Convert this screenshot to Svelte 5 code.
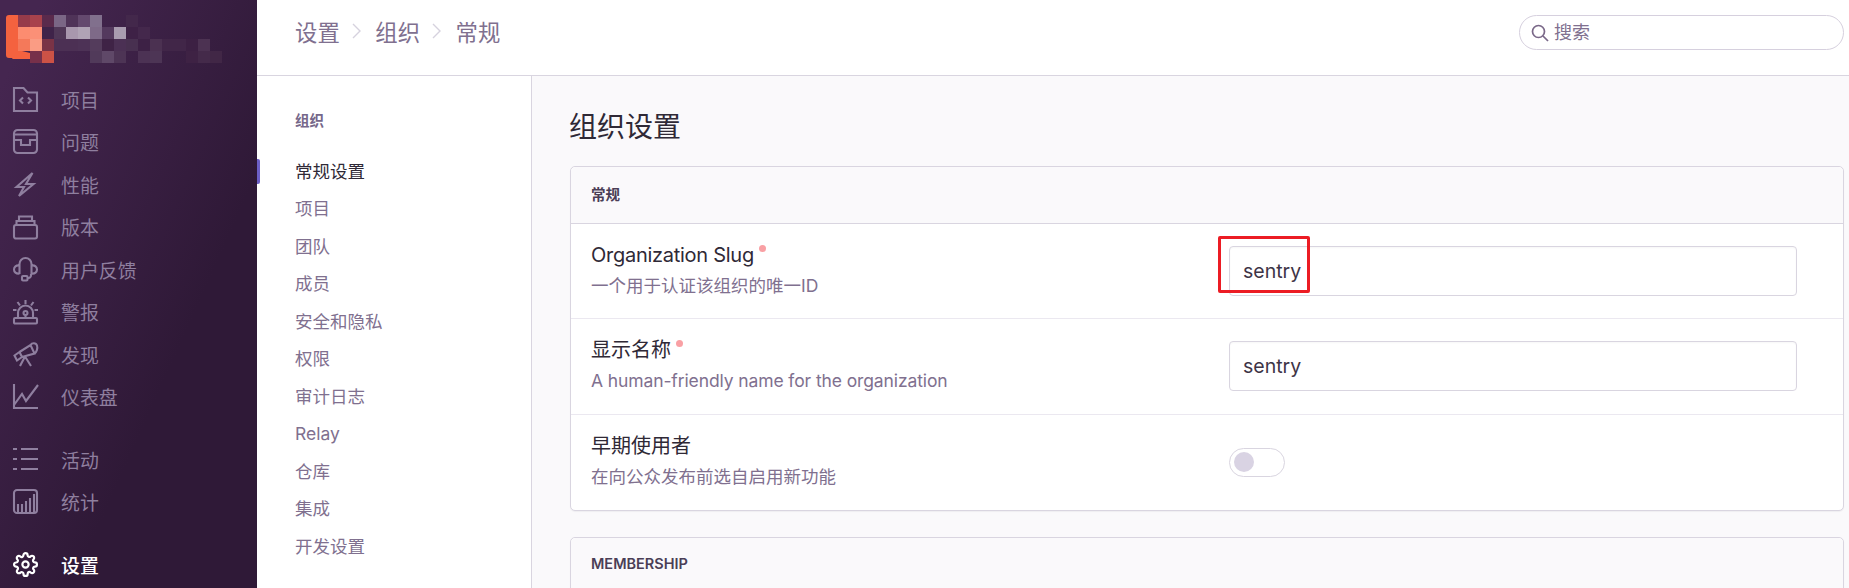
<script>
  const cell = 12;
  const mosaic = [
    [18,15,'#963b4a'],[30,15,'#a8424c'],[42,15,'#5a2a4c'],[54,15,'#7a6685'],[66,15,'#4f3358'],[78,15,'#64496e'],[90,15,'#81708d'],[126,15,'#43284b'],
    [18,27,'#fc8c70'],[30,27,'#fb9077'],[42,27,'#3f2349'],[54,27,'#503757'],[66,27,'#a897ad'],[78,27,'#b0a3b5'],[90,27,'#7e6a88'],[102,27,'#54395e'],[114,27,'#a99cb0'],[126,27,'#3e2146'],[138,27,'#44284c'],
    [18,39,'#f4795a'],[30,39,'#fa9c84'],[42,39,'#7a3346'],[54,39,'#4c3054'],[66,39,'#4c3054'],[78,39,'#4d3256'],[90,39,'#543c5c'],[102,39,'#3f2346'],[114,39,'#4b3054'],[126,39,'#483050'],[138,39,'#3d2145'],[150,39,'#4b3151'],[162,39,'#412648'],[174,39,'#412648'],[186,39,'#3c2043'],[198,39,'#4c3252'],
    [30,51,'#77304a'],[42,51,'#cc5246'],[90,51,'#513a5a'],[102,51,'#5f4868'],[114,51,'#4d3455'],[138,51,'#4c3254'],[150,51,'#4d3555'],[186,51,'#3e2244'],[198,51,'#442a4a'],[210,51,'#412746']
  ];
  const primary = [
    { label: '项目', icon: 'projects' },
    { label: '问题', icon: 'issues' },
    { label: '性能', icon: 'perf' },
    { label: '版本', icon: 'releases' },
    { label: '用户反馈', icon: 'support' },
    { label: '警报', icon: 'siren' },
    { label: '发现', icon: 'telescope' },
    { label: '仪表盘', icon: 'graph' }
  ];
  const secondary = [
    { label: '活动', icon: 'list' },
    { label: '统计', icon: 'stats' }
  ];
  const subnav = ['项目','团队','成员','安全和隐私','权限','审计日志','Relay','仓库','集成','开发设置'];
</script>

{#snippet icon(name)}
  <svg class="ico" viewBox="0 0 25 25" aria-hidden="true">
    {#if name === 'projects'}
      <path d="M1 1h9.500l4 4.500H24V24H1z"/><path d="M10 10.500 7 13.500l3 3M15 10.500l3 3-3 3"/>
    {:else if name === 'issues'}
      <rect x="1" y="1" width="23" height="23" rx="3.500"/><path d="M1 5.500h23M1 11h7v5h9v-5h7"/>
    {:else if name === 'perf'}
      <path d="M19.500 1 3.500 15H11L6 24l14.500-12H13z"/>
    {:else if name === 'releases'}
      <rect x="1" y="11" width="23" height="13.500" rx="2"/><path d="M3.500 11V7h18v4M6 6.500V2.500h13v4"/>
    {:else if name === 'support'}
      <path d="M6.500 17V7a6 6 0 0 1 12 0v10M6.500 8.500C3 8 1 10 1 12.500S3 17 6.500 16.500M18.500 8.500c3.500-.5 5.500 1.500 5.500 4s-2 4.500-5.500 4M18 17v1.500a2.500 2.500 0 0 1-2.500 2.500H14"/><rect x="9" y="19" width="5.500" height="4.500" rx="1"/>
    {:else if name === 'siren'}
      <rect x="1" y="19" width="23" height="5.500" rx="1"/><path d="M5 19v-5a7.500 7.500 0 0 1 15 0v5M12.500 16v3M12.500 1v4M4.500 3l2.500 3.500M20.500 3 18 6.500M0 11h3.500M21.500 11H25"/><circle cx="12.500" cy="14" r="2"/>
    {:else if name === 'telescope'}
      <path d="M1.500 13.500 6.500 10 9 15l-5 3.500zM6.500 10 17.500 3l4 8.500L9 15M17.500 3c1.500-2.500 5.500-2.500 6.500.5s-.5 6.500-2.500 8M12 14.500 7 24M12 14.500 18 24"/>
    {:else if name === 'graph'}
      <path d="M1 0v24h24M1 21l8-11 4 7L25 1"/>
    {:else if name === 'list'}
      <path d="M0 2h4M8 2h17M0 12h4M8 12h17M0 22h4M8 22h17"/>
    {:else if name === 'stats'}
      <rect x="1" y="1" width="23" height="23" rx="3"/><path d="M5 23v-8M9 23v-8M13 23V12M17 23V9M21 23V5"/>
    {/if}
  </svg>
{/snippet}

<div class="page">
  <aside class="side">
    <div class="brand">
      <svg width="230" height="70" viewBox="0 0 230 70" aria-hidden="true">
        <path d="M9 15h45v24H18v19h-9a3 3 0 0 1-3-3V18a3 3 0 0 1 3-3z" fill="#f4623f"/>
        <path d="M18 50l36 9H12z" fill="#f4623f"/>
        {#each mosaic as [x, y, c]}
          <rect x={x} y={y} width={cell} height={cell} fill={c}/>
        {/each}
      </svg>
    </div>
    <nav class="group">
      {#each primary as item}
        <div class="item">{@render icon(item.icon)}<span>{item.label}</span></div>
      {/each}
    </nav>
    <nav class="group gap">
      {#each secondary as item}
        <div class="item">{@render icon(item.icon)}<span>{item.label}</span></div>
      {/each}
    </nav>
    <nav class="group gap">
      <div class="item active">
        <svg class="ico gear" viewBox="0 0 24 24" aria-hidden="true">
          <path d="M12 15a3 3 0 1 0 0-6 3 3 0 0 0 0 6z"/>
          <path d="M19.4 15a1.65 1.65 0 0 0 .33 1.82l.06.06a2 2 0 0 1 0 2.83 2 2 0 0 1-2.83 0l-.06-.06a1.65 1.65 0 0 0-1.82-.33 1.65 1.65 0 0 0-1 1.51V21a2 2 0 0 1-2 2 2 2 0 0 1-2-2v-.09A1.65 1.65 0 0 0 9 19.4a1.65 1.65 0 0 0-1.82.33l-.06.06a2 2 0 0 1-2.83 0 2 2 0 0 1 0-2.83l.06-.06a1.65 1.65 0 0 0 .33-1.82 1.65 1.65 0 0 0-1.51-1H3a2 2 0 0 1-2-2 2 2 0 0 1 2-2h.09A1.65 1.65 0 0 0 4.6 9a1.65 1.65 0 0 0-.33-1.82l-.06-.06a2 2 0 0 1 0-2.83 2 2 0 0 1 2.83 0l.06.06a1.65 1.65 0 0 0 1.82.33H9a1.65 1.65 0 0 0 1-1.51V3a2 2 0 0 1 2-2 2 2 0 0 1 2 2v.09a1.65 1.65 0 0 0 1 1.51 1.65 1.65 0 0 0 1.82-.33l.06-.06a2 2 0 0 1 2.83 0 2 2 0 0 1 0 2.83l-.06.06a1.65 1.65 0 0 0-.33 1.82V9a1.65 1.65 0 0 0 1.51 1H21a2 2 0 0 1 2 2 2 2 0 0 1-2 2h-.09a1.65 1.65 0 0 0-1.51 1z"/>
        </svg>
        <span>设置</span>
      </div>
    </nav>
  </aside>

  <div class="main">
    <header class="top">
      <div class="crumbs">
        <span>设置</span>
        <svg class="chev" viewBox="0 0 9 16" aria-hidden="true"><path d="M1 1l7 7-7 7"/></svg>
        <span>组织</span>
        <svg class="chev" viewBox="0 0 9 16" aria-hidden="true"><path d="M1 1l7 7-7 7"/></svg>
        <span>常规</span>
      </div>
      <label class="search">
        <svg viewBox="0 0 18 18" aria-hidden="true"><circle cx="7.500" cy="7.500" r="6"/><path d="M12 12l5 5"/></svg>
        <input placeholder="搜索" />
      </label>
    </header>

    <div class="body">
      <aside class="sub">
        <h4>组织</h4>
        <div class="link current">常规设置</div>
        {#each subnav as s}
          <div class="link">{s}</div>
        {/each}
      </aside>

      <main class="content">
        <h1>组织设置</h1>
        <section class="panel">
          <div class="phead">常规</div>
          <div class="row">
            <div class="desc">
              <div class="lbl"><span class="latin">Organization Slug</span><i class="req"></i></div>
              <div class="help">一个用于认证该组织的唯一ID</div>
            </div>
            <div class="ctl">
              <input class="txt" value="sentry" />
              <div class="redbox"></div>
            </div>
          </div>
          <div class="row">
            <div class="desc">
              <div class="lbl">显示名称<i class="req"></i></div>
              <div class="help en">A human-friendly name for the organization</div>
            </div>
            <div class="ctl"><input class="txt" value="sentry" /></div>
          </div>
          <div class="row last">
            <div class="desc">
              <div class="lbl">早期使用者</div>
              <div class="help">在向公众发布前选自启用新功能</div>
            </div>
            <div class="ctl"><div class="switch"><b></b></div></div>
          </div>
        </section>
        <section class="panel second">
          <div class="phead caps">MEMBERSHIP</div>
        </section>
      </main>
    </div>
  </div>
</div>

<style>
  :global(body) { margin: 0; }
  .page {
    --cjk: Inter, "Noto Sans CJK SC", sans-serif;
    display: flex; width: 1849px; height: 588px; overflow: hidden;
    font-family: var(--cjk); background: #fff;
  }
  .side {
    width: 257px; flex: none; height: 588px; box-sizing: border-box;
    background: linear-gradient(294.17deg, #2f1937 35.57%, #452650 92.42%);
  }
  .brand { height: 77.75px; }
  .brand svg { display: block; }
  .item {
    height: 42.5px; display: flex; align-items: center; gap: 23px;
    padding-left: 13px; color: #8f7f9f; font-size: 18.9px;
  }
  .item.active { color: #fff; font-weight: 500; }
  .gap { margin-top: 20px; }
  .ico { width: 25px; height: 25px; flex: none; fill: none; stroke: #8f7f9f; stroke-width: 2.1; overflow: visible; }
  .gear { stroke: #fff; }

  .main { flex: 1; min-width: 0; display: flex; flex-direction: column; }
  .top {
    height: 75px; flex: none; display: flex; align-items: center; justify-content: space-between;
    padding: 0 5px 0 38px; border-bottom: 1px solid #d9d5e0; box-sizing: content-box;
  }
  .crumbs { display: flex; align-items: center; gap: 12px; font-size: 22.4px; color: #80708f; margin-top: -13px; }
  .chev { width: 9px; height: 16px; fill: none; stroke: #d6d2de; stroke-width: 1.4; margin-right: 2.5px; }
  .search {
    width: 325px; height: 35px; box-sizing: border-box; border: 1px solid #d6d0de; border-radius: 18px;
    display: flex; align-items: center; gap: 5px; padding-left: 11px; margin-top: -10px;
  }
  .search svg { width: 18px; height: 18px; fill: none; stroke: #7a6888; stroke-width: 1.7; flex: none; }
  .search input { border: 0; outline: 0; flex: 1; min-width: 0; font: 18px var(--cjk); background: none; padding: 0; }
  .search input::placeholder { color: #80708f; opacity: 1; }

  .body { flex: 1; display: flex; min-height: 0; }
  .sub { flex: none; border-right: 1px solid #d9d5e0; padding-left: 38px; box-sizing: content-box; width: 236px; }
  .sub h4 { margin: 35.500px 0 23px; font-size: 14.500px; line-height: 18px; font-weight: 600; color: #75678a; }
  .link { height: 37.5px; line-height: 37.5px; font-size: 17.500px; color: #80708f; position: relative; }
  .link.current { color: #2f2936; }
  .link.current::before {
    content: ""; position: absolute; left: -38px; top: 6px; width: 2.500px; height: 25px;
    background: #6c5fc7; border-radius: 0 2px 2px 0;
  }

  .content { flex: 1; min-width: 0; background: #faf9fb; padding: 0 5px 0 38px; }
  h1 { margin: 0 0 0 -1px; height: 90px; line-height: 102px; font-size: 28px; font-weight: 400; color: #2f2936; }
  .panel { background: #fff; border: 1px solid #d9d5e0; border-radius: 5px; box-shadow: 0 1px 1px rgba(47,41,54,.05); }
  .phead {
    height: 56px; line-height: 56px; padding-left: 20px; font-size: 14.500px; font-weight: 600; color: #4a3e56;
    background: #faf9fb; border-bottom: 1px solid #d9d5e0; border-radius: 5px 5px 0 0;
  }
  .phead.caps { font-size: 14.500px; line-height: 52px; }
  .second { margin-top: 26px; }
  .row { height: 95.33px; box-sizing: border-box; display: flex; align-items: center; padding: 0 46px 0 20px; border-bottom: 1px solid #ebe8f0; }
  .row.last { border-bottom: 0; }
  .desc { flex: 1; min-width: 0; padding-bottom: 2.600px; }
  .lbl { font-size: 20px; line-height: 26px; color: #2f2936; display: flex; }
  .latin { letter-spacing: -0.27px; }
  .req { width: 7px; height: 7px; border-radius: 50%; background: #f9a0a4; margin: 3px 0 0 5px; }
  .help { font-size: 17.500px; line-height: 24px; margin-top: 5.800px; color: #80708f; }
  .help.en { letter-spacing: -0.11px; }
  .ctl { width: 568px; flex: none; position: relative; }
  .txt {
    display: block; width: 100%; height: 50px; box-sizing: border-box; border: 1px solid #d9d5e0; border-radius: 4px;
    padding: 0 13px; font: 19.500px var(--cjk); color: #3e3446; background: #fff; outline: 0;
    box-shadow: inset 0 1px 2px rgba(47,41,54,.04);
  }
  .redbox {
    position: absolute; left: -11px; top: -10px; width: 92px; height: 57px; box-sizing: border-box;
    border: 3px solid #ec1c24; border-radius: 2px; pointer-events: none;
  }
  .switch { width: 56px; height: 29px; box-sizing: border-box; border: 1px solid #d9d5e0; border-radius: 15px; display: flex; align-items: center; padding-left: 4px; }
  .switch b { width: 20px; height: 20px; border-radius: 50%; background: #d9d3e3; }
</style>
